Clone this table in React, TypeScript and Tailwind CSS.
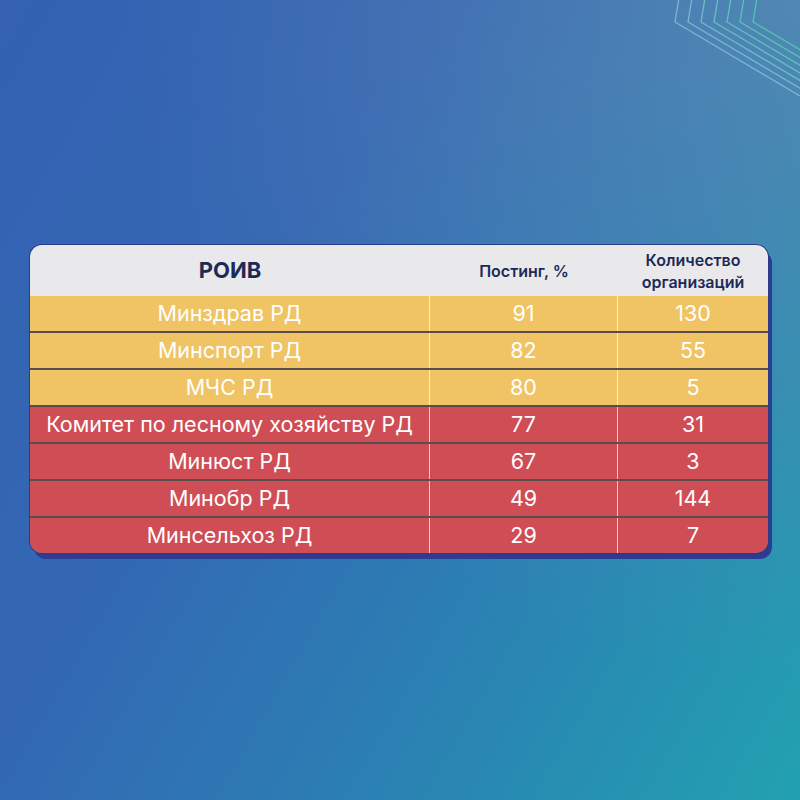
const rows = [
  { name: 'Минздрав РД', posting: 91, orgs: 130, tone: 'yellow' },
  { name: 'Минспорт РД', posting: 82, orgs: 55, tone: 'yellow' },
  { name: 'МЧС РД', posting: 80, orgs: 5, tone: 'yellow' },
  { name: 'Комитет по лесному хозяйству РД', posting: 77, orgs: 31, tone: 'red' },
  { name: 'Минюст РД', posting: 67, orgs: 3, tone: 'red' },
  { name: 'Минобр РД', posting: 49, orgs: 144, tone: 'red' },
  { name: 'Минсельхоз РД', posting: 29, orgs: 7, tone: 'red' },
];

function CornerLines() {
  const offsets = [0, 13, 26, 39, 52, 65, 78];
  const colors = ['#8ab8d8', '#7ebed4', '#72c4cc', '#68c8c4', '#5ecbbc', '#56cdb4', '#50cfac'];
  return (
    <svg className="absolute right-0 top-0" width="140" height="120" viewBox="0 0 140 120" fill="none">
      {offsets.map((o, i) => (
        <polyline
          key={o}
          points={`${19 + o},-2 ${15 + o},22 ${140 + o},96`}
          stroke={colors[i]}
          strokeWidth="1.3"
          opacity="0.9"
        />
      ))}
    </svg>
  );
}

export default function App() {
  return (
    <div className="relative w-[800px] h-[800px] overflow-hidden bg-[linear-gradient(120deg,#3461b2_0%,#3368b3_35%,#2b80b3_65%,#22a1b0_100%)] font-['Inter',sans-serif]">
      <div className="absolute inset-0 bg-[radial-gradient(circle_at_100%_0%,rgba(125,145,180,0.45),rgba(125,145,180,0)_60%)]" />
      <CornerLines />

      <div className="relative pt-[245px] pl-[30px]">
        <div className="w-[738px] rounded-[12px] overflow-hidden shadow-[0_0_0_1px_#2c3b8a,4px_6px_0_#2b3c92]">
          <div className="flex h-[51px] bg-[#e9e9eb] text-[#1d2a57]">
            <div className="w-[400px] flex items-center justify-center text-[22px] font-bold">РОИВ</div>
            <div className="w-[188px] flex items-center justify-center text-[16px] font-semibold">Постинг, %</div>
            <div className="w-[150px] flex flex-col items-center justify-center text-[16px] font-semibold leading-[22px]">
              <span>Количество</span>
              <span>организаций</span>
            </div>
          </div>
          {rows.map((r, i) => (
            <div
              key={r.name}
              className={
                'flex text-white text-[21.5px] ' +
                (i === 0 ? 'h-[35px] ' : 'h-[37px] border-t-2 border-[#5a4e4c] ') +
                (r.tone === 'yellow' ? 'bg-[#f0c465]' : 'bg-[#cf4e55]')
              }
            >
              <div className="w-[400px] flex items-center justify-center border-r border-white/70">{r.name}</div>
              <div className="w-[188px] flex items-center justify-center border-r border-white/70">{r.posting}</div>
              <div className="w-[150px] flex items-center justify-center">{r.orgs}</div>
            </div>
          ))}
        </div>
      </div>
    </div>
  );
}
